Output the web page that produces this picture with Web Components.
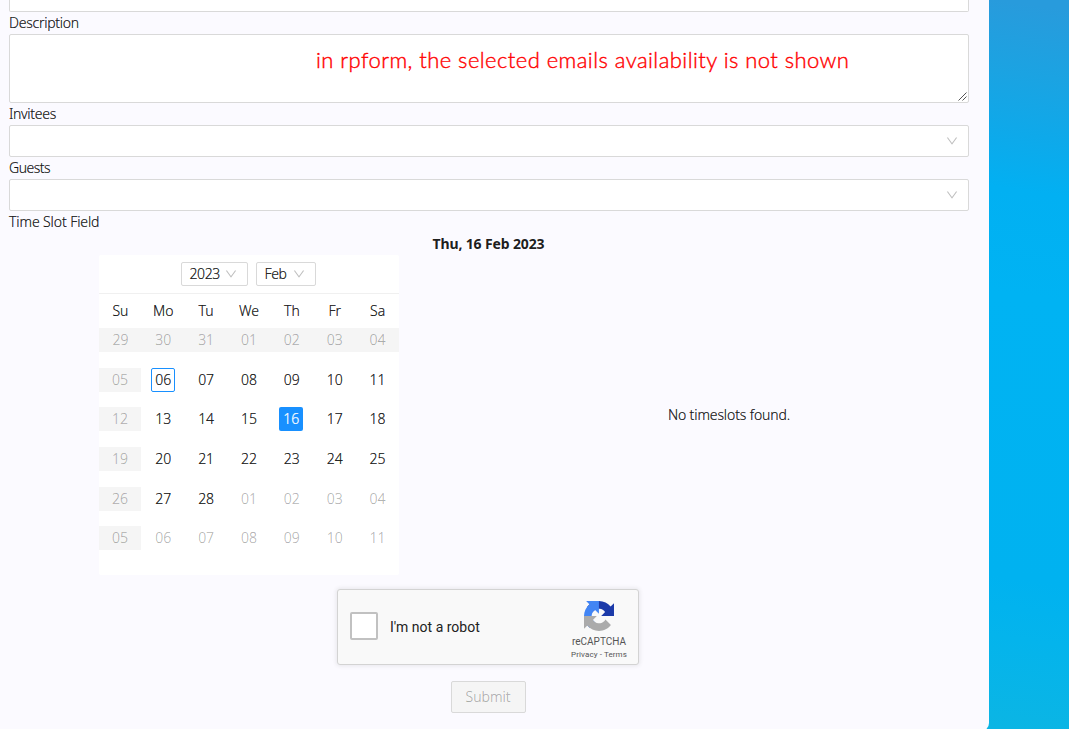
<!DOCTYPE html>
<html lang="en">
<head>
<meta charset="utf-8">
<title>Booking form</title>
<style>
html,body{margin:0;height:729px;overflow:hidden}
body{font:300 14px/22px "Noto Sans","Open Sans",sans-serif;color:rgba(0,0,0,.9);-webkit-text-stroke:.22px;background:#00b2f2}
</style>
</head>
<body>
<booking-form></booking-form>
<script>
const define = (name, html, setup) => {
  const t = document.createElement('template');
  t.innerHTML = html;
  customElements.define(name, class extends HTMLElement {
    constructor() {
      super();
      this.attachShadow({mode: 'open'}).append(t.content.cloneNode(true));
    }
    connectedCallback() { if (setup) setup(this, this.shadowRoot); }
  });
};

define('chevron-icon', `
<style>:host{display:block;width:12px;height:12px;color:#bfbfbf}svg{display:block}</style>
<svg width="12" height="12" viewBox="64 64 896 896" fill="currentColor"><path d="M884 256h-75c-5.100 0-9.900 2.500-12.900 6.600L512 654.200 227.900 262.600c-3-4.100-7.800-6.600-12.900-6.600h-75c-6.500 0-10.300 7.400-6.500 12.700l352.600 486.100c12.800 17.600 39 17.600 51.700 0l352.600-486.100c3.900-5.300.1-12.700-6.400-12.700z"/></svg>`);

define('form-field', `
<style>:host{display:block}.l{height:22px;white-space:nowrap}</style>
<div class="l"><slot name="label"></slot></div><slot></slot>`);

define('select-box', `
<style>
:host{display:flex;align-items:center;justify-content:space-between;box-sizing:border-box;height:32px;padding:0 10px 0 11px;background:#fff;border:1px solid #d9d9d9;border-radius:2px}
:host([small]){height:24px;padding:0 10px 0 7.500px;letter-spacing:-.4px}
</style><span><slot></slot></span><chevron-icon></chevron-icon>`);

define('text-area', `
<style>
:host{display:block;position:relative;box-sizing:border-box;height:69px;background:#fff;border:1px solid #d9d9d9;border-radius:2px;padding:10px 0 0 306px;font:300 22px/30px Lato,sans-serif;-webkit-text-stroke:.4px;letter-spacing:.445px;color:#f00;white-space:nowrap}
svg{position:absolute;right:1px;bottom:1px}
</style><slot></slot>
<svg width="9" height="9" viewBox="0 0 9 9" stroke="#555" stroke-width="1"><path d="M.5 8.500L8.500.5M4.500 8.500L8.500 4.500"/></svg>`);

define('month-calendar', `
<style>
:host{display:block;width:300px;height:320px;background:#fff;border-radius:2px}
header{display:flex;box-sizing:border-box;height:39px;padding:7px 0 0 82px;gap:8px;border-bottom:1px solid #f0f0f0}
header :first-child{width:67px}header :last-child{width:60px}
.w,.d{display:grid;grid-template-columns:repeat(7,1fr);text-align:center}
.w{height:34px;line-height:34px}
.d{grid-auto-rows:39.67px}
.c{height:24px;line-height:24px}
.c i{display:inline-block;box-sizing:border-box;width:24px;height:24px;font-style:normal;border-radius:2px}
.mute{color:rgba(0,0,0,.27)}
.off{background:#f5f5f5}
.off.col{width:42px}
.now i{border:1px solid #1890ff;line-height:22px}
.sel i{background:#1890ff;color:#fff;margin-left:-1px}
</style>
<header><select-box small>2023</select-box><select-box small>Feb</select-box></header>
<div class="w"></div><div class="d"></div>`, (host, root) => {
  root.querySelector('.w').innerHTML = ['Su','Mo','Tu','We','Th','Fr','Sa'].map(d => `<span>${d}</span>`).join('');
  let out = '';
  for (let n = 0; n < 42; n++) {
    const date = new Date(2023, 0, 29 + n), day = date.getDate(), inMonth = date.getMonth() === 1;
    const cls = ['c'];
    if (n < 7 || n % 7 === 0) cls.push('off', 'mute'); else if (!inMonth) cls.push('mute');
    if (n >= 7 && n % 7 === 0) cls.push('col');
    if (inMonth && day === 6) cls.push('now');
    if (inMonth && day === 16) cls.push('sel');
    out += `<div class="${cls.join(' ')}"><i>${String(day).padStart(2, '0')}</i></div>`;
  }
  root.querySelector('.d').innerHTML = out;
});

define('robot-check', `
<style>
:host{display:flex;box-sizing:border-box;width:302px;height:76px;padding-left:12px;background:#f9f9f9;border:1px solid #d3d3d3;border-radius:3px;box-shadow:0 0 4px 1px rgba(0,0,0,.08);font-family:Roboto,sans-serif;font-weight:400;-webkit-text-stroke:0;color:#222}
.b{box-sizing:border-box;width:28px;height:28px;margin-top:22px;border:2px solid #c1c1c1;border-radius:2px;background:#fff}
.t{flex:1;margin:27px 0 0 12px;font-size:14px;line-height:20px}
.r{display:flex;flex-direction:column;align-items:center;width:78px;padding-top:11px;color:#555}
.n{font-size:10px;line-height:12px;margin-top:5px}
.p{font-size:8px;line-height:10px;margin-top:2px;white-space:nowrap;letter-spacing:.1px}
svg{display:block}
</style>
<div class="b"></div><div class="t">I'm not a robot</div>
<div class="r">
<svg width="30" height="30" viewBox="0 0 64 64"><path fill="#1c3aa9" d="M64 31.955l-.033-1.370V4.687l-7.160 7.160C50.948 4.674 42.033.093 32.050.093c-10.400 0-19.622 4.960-25.458 12.640l11.736 11.860a15.550 15.550 0 0 1 4.754-5.334c2.050-1.600 4.952-2.906 8.968-2.906.485 0 .86.057 1.135.163 4.976.393 9.288 3.140 11.828 7.124l-8.307 8.307L64 31.953"/><path fill="#4285f4" d="M31.862.094l-1.370.033H4.594l7.160 7.160C4.580 13.147 0 22.060 0 32.046c0 10.400 4.960 19.622 12.640 25.458L24.500 45.768a15.550 15.550 0 0 1-5.334-4.754c-1.600-2.050-2.906-4.952-2.906-8.968 0-.485.057-.86.163-1.135.393-4.976 3.140-9.288 7.124-11.828l8.307 8.307L31.860.095"/><path fill="#ababab" d="M.001 32.045l.033 1.370v25.898l7.160-7.160c5.860 7.173 14.774 11.754 24.760 11.754 10.400 0 19.622-4.960 25.458-12.640l-11.736-11.860a15.550 15.550 0 0 1-4.754 5.334c-2.050 1.600-4.952 2.906-8.968 2.906-.485 0-.86-.057-1.135-.163-4.976-.393-9.288-3.140-11.828-7.124l8.307-8.307c-10.522.04-22.400.066-27.295-.005"/></svg>
<div class="n">reCAPTCHA</div><div class="p">Privacy - Terms</div></div>`);

define('submit-button', `
<style>:host{display:flex;align-items:center;justify-content:center;box-sizing:border-box;width:75px;height:32px;border:1px solid #d9d9d9;border-radius:2px;background:#f5f5f5;color:rgba(0,0,0,.27)}</style><slot></slot>`);

define('booking-form', `
<style>
:host{display:flex;height:731px;background:linear-gradient(188deg,#289bdc 10px,#1ba3e2 80px,#0ea9ea 140px,#02b0f2 195px,#00b3f3 300px,#00b2f0 580px,#04b4ec 640px,#0bb5e4 729px)}
main{box-sizing:border-box;width:989px;height:731px;padding:0 20px 0 9px;background:#fbfaff;border-radius:0 0 8px 0}
.top{box-sizing:border-box;height:12px;background:#fff;border:1px solid #d9d9d9;border-top:0;border-radius:0 0 2px 2px}
h4{margin:0;font-size:14px;line-height:22px;font-weight:700;text-align:center;letter-spacing:-.14px;-webkit-text-stroke:0;padding-right:1px}
.s{display:grid;grid-template-columns:1fr 1fr;place-items:center;height:320px}
.f{display:flex;flex-direction:column;align-items:center;gap:16px;padding:14px 2px 0 0}
</style>
<main>
<div class="top"></div>
<form-field><span slot="label" style="letter-spacing:-.25px">Description</span><text-area>in rpform, the selected emails availability is not shown</text-area></form-field>
<form-field><span slot="label" style="letter-spacing:-.3px">Invitees</span><select-box></select-box></form-field>
<form-field><span slot="label" style="letter-spacing:-.5px">Guests</span><select-box></select-box></form-field>
<form-field><span slot="label" style="letter-spacing:-.1px">Time Slot Field</span>
<h4>Thu, 16 Feb 2023</h4>
<div class="s"><month-calendar></month-calendar><span style="letter-spacing:-.12px">No timeslots found.</span></div></form-field>
<div class="f"><robot-check></robot-check><submit-button>Submit</submit-button></div>
</main>`);
</script>
</body>
</html>
